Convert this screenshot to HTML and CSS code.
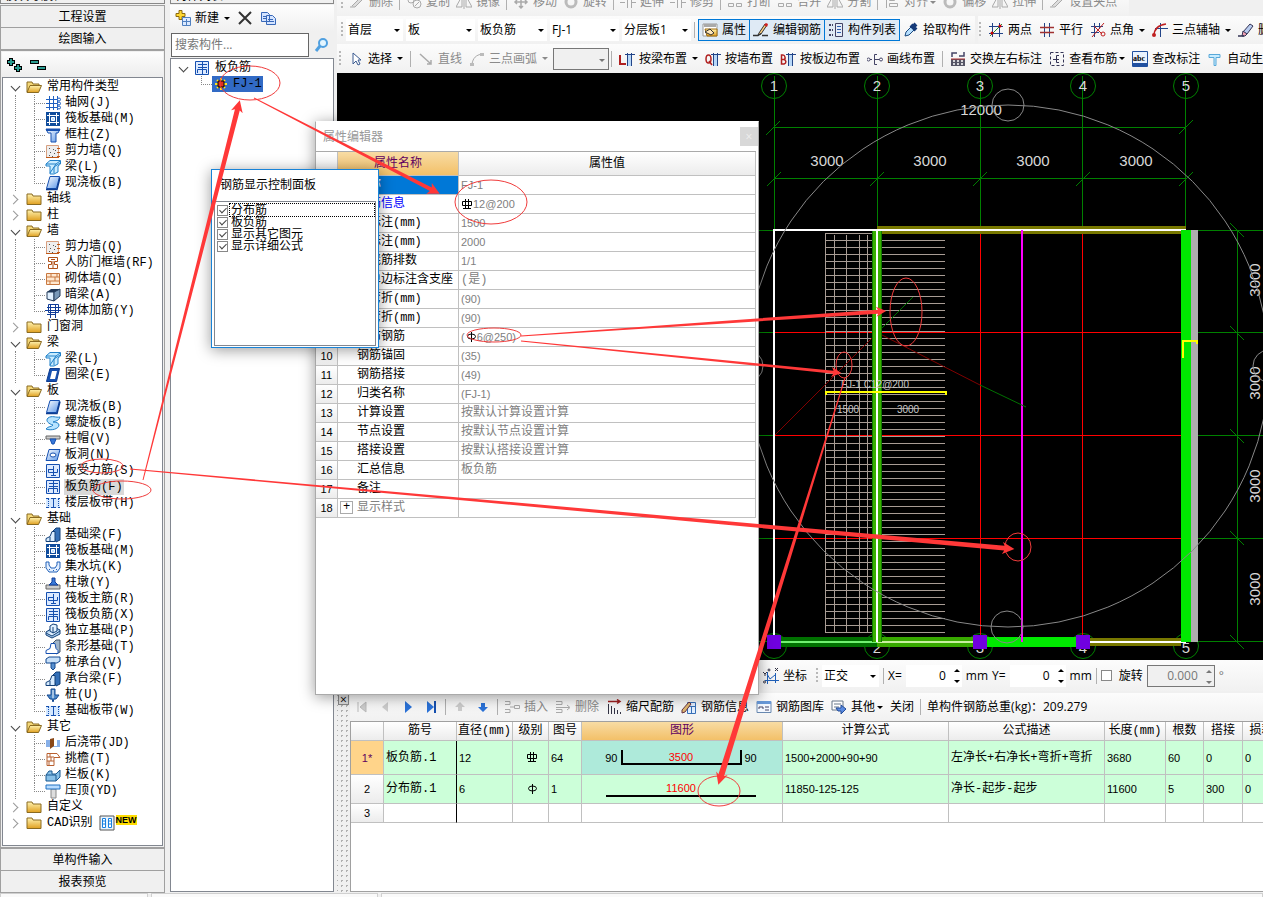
FILE: index.html
```
<!DOCTYPE html>
<html lang="zh-CN">
<head>
  <meta charset="UTF-8">
  <meta name="viewport" content="width=device-width, initial-scale=1.0">
  <title>板负筋 FJ-1</title>
  <link rel="stylesheet" href="styles.css">
</head>
<body>
  <!-- Icon set -->
  <svg class="sprite" aria-hidden="true">
    <defs>
      <linearGradient id="gold" x2="0" y2="1"><stop stop-color="#fff3b0"/><stop offset="1" stop-color="#e0a020"/></linearGradient>
      <linearGradient id="blue" x2="1" y2="1"><stop stop-color="#fff"/><stop offset="1" stop-color="#5a96e8"/></linearGradient>
    </defs>
    <symbol id="open" viewBox="0 0 16 16"><path d="M1 13V3h5l1 2h6v2" fill="#f4d878" stroke="#8a6a20"/><path d="M1 13.500 4 6.500h11.500l-3 7z" fill="url(#gold)" stroke="#8a6a20"/></symbol>
    <symbol id="folder" viewBox="0 0 16 16"><path d="M1 13.500V3h5l1 2h8v8.500z" fill="url(#gold)" stroke="#8a6a20"/></symbol>
    <symbol id="axis" viewBox="0 0 16 16"><path d="M4.500 1v14M8.500 1v14M12.500 1v14M1 4.500h13M1 8.500h13M1 12.500h13" stroke="#1e5fc0"/><g fill="#fff" stroke="#1e5fc0"><circle cx="14" cy="4.500" r="1.500"/><circle cx="14" cy="8.500" r="1.500"/><circle cx="14" cy="12.500" r="1.500"/></g></symbol>
    <symbol id="raft" viewBox="0 0 16 16"><path fill="#0f4c9c" d="M1 1h14v14H1z"/><path d="M2 4.500h12M2 11.500h12M4.500 2v12M11.500 2v12" stroke="#fff"/><path d="M6.500 6.500h3v3h-3z" stroke="#fff" fill="#bfe0ff"/></symbol>
    <symbol id="column" viewBox="0 0 16 16"><path d="M1 2h14l-2 4h-2v9H6V6H3z" fill="url(#blue)" stroke="#1650b0"/><path d="M1 3h14" stroke="#1650b0" stroke-width="2"/></symbol>
    <symbol id="wall" viewBox="0 0 16 16"><path d="M1.500 2.500h12v12h-12z" fill="#eee" stroke="#d8a080"/><path d="M1 14.500h13M12 5.500h3M12 9.500h3M12 13.500h3" stroke="#c05818"/><path d="M4 5.500h1M8 6.500h1M5 9.500h1M9 10.500h1M4 12.500h1M7 13.500h1M10 7.500h1" stroke="#555"/></symbol>
    <symbol id="beam" viewBox="0 0 16 16"><path d="M1 5 5 1.500h10.500V5L13 7v6l-4 2H5V7H1z" fill="#c8ecff" stroke="#2080c8"/><path d="M1 5h10l4-3M11 5l-6 9M9 14V8l6-4" stroke="#2080c8" fill="none"/></symbol>
    <symbol id="slab" viewBox="0 0 16 16"><path d="M5 1.500h9.500l-3 12h-10z" fill="url(#blue)" stroke="#1650b0"/><path d="M1 14.500h11l3-12" fill="none" stroke="#0d3c90" stroke-width="1.500"/></symbol>
    <symbol id="rf" viewBox="0 0 16 16"><path d="M3.500 2.500h9v4h-3v3h3v4h-9v-4h3v-3h-3z" fill="#fff" stroke="#b05018"/><path d="M6 4.500h4M8 6v7" stroke="#b05018"/></symbol>
    <symbol id="brick" viewBox="0 0 16 16"><path d="M1.500 2.500h13v11h-13zM1 6h14M1 10h14M6 2v4M10 6v4M5 10v4M12 2v4" fill="#ffe8d0" stroke="#c87840"/></symbol>
    <symbol id="box" viewBox="0 0 16 16"><path d="m2 5 4-3h9l-4 3z" fill="#203858"/><path d="M2 5h7v9l-7-2z" fill="#e0f0ff" stroke="#203858"/><path d="m9 5 6-3v7l-6 5z" fill="#7898b8" stroke="#203858"/></symbol>
    <symbol id="rein" viewBox="0 0 16 16"><path d="M3.500 1.500h10v8h-10zM0 7.500h16M5.500 1v14M10.500 1v14M2 4.500h14M2 11.500h9" fill="none" stroke="#103c98"/></symbol>
    <symbol id="ring" viewBox="0 0 16 16"><path d="M5 1.500h9.500l-3 13h-10z" fill="#1650b0" stroke="#0d3c90"/><path d="M7 4h5l-2 8H5z" fill="#fff"/></symbol>
    <symbol id="spiral" viewBox="0 0 16 16"><path d="M3 3c4-3 8 0 12-1-1 4-5 4-7 5 3 0 6 1 6 3 0 4-8 6-13 4 2-3 6-2 7-4C4 9 0 6 3 3z" fill="#b8e4ff" stroke="#2080c8"/></symbol>
    <symbol id="cap" viewBox="0 0 16 16"><path d="M1 5h14v3H1z" fill="#ccc" stroke="#666"/><path d="M5 8h6l-2 5H7z" fill="#3878d8" stroke="#1650b0"/></symbol>
    <symbol id="hole" viewBox="0 0 16 16"><path d="M4 2.500h11l-3 11H1z" fill="url(#blue)" stroke="#1650b0"/><ellipse cx="8" cy="8" rx="3" ry="2" fill="#fff" stroke="#1650b0"/></symbol>
    <symbol id="force" viewBox="0 0 16 16"><path d="M1.500 1.500h13v13h-13z" fill="#dceaff" stroke="#1650b0"/><path d="M8.500 3v10M4 6.500h4M3.500 6v3.500h9V6M6 12.500h5" fill="none" stroke="#1650b0"/></symbol>
    <symbol id="neg" viewBox="0 0 16 16"><path d="M1.500 1.500h13v13h-13z" fill="#dceaff" stroke="#1650b0"/><path d="M8.500 1v14M4 4.500h9M3.500 13V9.500h9V13M4 7.500h9" fill="none" stroke="#1650b0"/></symbol>
    <symbol id="strip" viewBox="0 0 16 16"><path fill="#d4e8ff" d="M1 3h14v10H1z"/><path d="M1 3.500h3M1 12.500h3M6 3.500h5M6 12.500h5M13 3.500h2M13 12.500h2M8.500 3v10" stroke="#1650b0"/><path d="M3.500 4v8M13.500 4v8" stroke="#1650b0" stroke-dasharray="1 1"/></symbol>
    <symbol id="fbeam" viewBox="0 0 16 16"><path d="m7 5 4-4h4v12l-4 2z" fill="#3470b8" stroke="#134078"/><path d="M1 14.500v-3l4-2 2-5h3v10z" fill="#d8ecff" stroke="#134078"/><path d="M5 10v4" stroke="#134078"/></symbol>
    <symbol id="sump" viewBox="0 0 16 16"><path d="M1 3h3v3l2 3h4l2-3V3h3v6l-3 4H4L1 9z" fill="#e4f0ff" stroke="#2060b8"/><path d="M4 10.500h1M8 11.500h1M11 10.500h1" stroke="#2060b8"/></symbol>
    <symbol id="pier" viewBox="0 0 16 16"><path d="M1 10h14v4H1z" fill="#ccc" stroke="#666"/><path d="m4 10 3-3V3h3v4l3 3z" fill="#3878d8" stroke="#103c98"/></symbol>
    <symbol id="iso" viewBox="0 0 16 16"><path d="m1 9 8-5 6 3v4l-8 4-6-3z" fill="#a8ccec" stroke="#134078"/><path d="M5 3 8 1l4 1v6L8 10 5 8zM8 4v6M1 10l6 3 8-5" fill="#e0f0ff" stroke="#134078"/></symbol>
    <symbol id="stripf" viewBox="0 0 16 16"><path d="m7 5 4-4h4v12l-4 2z" fill="#a0b4c8" stroke="#456"/><path d="M1 14.500v-3l4-2 1-5h4l1 5 2 2v3z" fill="#fff" stroke="#1650b0"/></symbol>
    <symbol id="pilecap" viewBox="0 0 16 16"><path d="m1 4 3-2h11v4l-3 2H1z" fill="#c8e0f8" stroke="#134890"/><path d="M6 8h4v5l-2 2-2-2z" fill="#5890d0" stroke="#134890"/></symbol>
    <symbol id="pile" viewBox="0 0 16 16"><path d="M6 2h4v6h4l-3 4H9l-1 3-1-3H5L2 8h4z" fill="#4c88c8" stroke="#134890"/><path d="M8 3v8" stroke="#fff"/></symbol>
    <symbol id="post" viewBox="0 0 16 16"><path d="M1 5h14v7H1z" fill="#88b0e8"/><path fill="#8a4818" d="m5 4 4-1v8l-4 3z"/><path fill="#fff" d="M9 5h3v6H9z"/></symbol>
    <symbol id="eave" viewBox="0 0 16 16"><path d="M2 2.500h10l3 4h-6v8H2zM2 6h7M2 10h7M5 2v4M6 6v4M4 10v4" fill="#fff" stroke="#b86030"/></symbol>
    <symbol id="rail" viewBox="0 0 16 16"><path d="m1 8 3-4h3v3h4l4-4v7l-4 4H1z" fill="#88c0e8" stroke="#185890"/><path d="M1 8h10v6" fill="none" stroke="#185890"/></symbol>
    <symbol id="top" viewBox="0 0 16 16"><path d="M6 6h5v9H6z" fill="#ddd" stroke="#888"/><path d="M1 2h14v4H1z" fill="#b8dcff" stroke="#2070c0"/></symbol>
    <symbol id="cad" viewBox="0 0 16 16"><path d="M1 1h14v14H1z" fill="#e8f4ff" stroke="#555"/><path d="M3.500 3.500h3v9h-3zM9.500 3.500h3v9h-3zM3 6h4M3 9h4M9 6h4M9 9h4" fill="#fff" stroke="#1880e0"/></symbol>
    <symbol id="rebar3" viewBox="0 0 12 12"><path d="M1.500 3.500h9v4h-9zM4.500 1v9M7.500 1v9M2 10.500h8" fill="none" stroke="#000"/></symbol>
    <symbol id="rebar1" viewBox="0 0 12 12"><ellipse cx="6.500" cy="5.500" rx="4" ry="2.500" fill="none" stroke="#000"/><path d="M6.500 1v10" stroke="#000"/></symbol>
    <!-- toolbar -->
    <symbol id="grey-pen" viewBox="0 0 16 16"><path d="m3 12 8-8 2 2-7 7H1" fill="#ddd" stroke="#aaa"/></symbol>
    <symbol id="grey-copy" viewBox="0 0 16 16"><circle cx="5" cy="6" r="3" fill="none" stroke="#aaa"/><circle cx="11" cy="10" r="4" fill="none" stroke="#aaa"/><path d="m9 12 4-4" stroke="#aaa"/></symbol>
    <symbol id="grey-pair" viewBox="0 0 16 16"><path d="M0 8.500h5M7.500 3v11M11.500 3v11M12 8.500h4" fill="none" stroke="#aaa"/></symbol>
    <symbol id="grey-tri" viewBox="0 0 16 16"><path d="M6 2v11H0zM10 2v11h6zM8 1v14" fill="none" stroke="#aaa"/></symbol>
    <symbol id="grey-move" viewBox="0 0 16 16"><path d="M8 2v12M2 8h12M6 12l2 2 2-2M6 4l2-2 2 2M4 6 2 8l2 2M12 6l2 2-2 2" fill="none" stroke="#aaa" stroke-width="1.500"/></symbol>
    <symbol id="grey-ring" viewBox="0 0 16 16"><circle cx="8" cy="8" r="5" fill="none" stroke="#bbb" stroke-width="3"/></symbol>
    <symbol id="grey-box" viewBox="0 0 16 16"><path d="M1.500 9.500h5v3h-5zM9.500 9.500h5v3h-5z" fill="none" stroke="#aaa"/></symbol>
    <symbol id="grey-align" viewBox="0 0 16 16"><path d="M2.500 1v13M5.500 3.500h5v3h-5zM5.500 9.500h8v3h-8z" fill="none" stroke="#aaa"/></symbol>
    <symbol id="prop" viewBox="0 0 16 16"><path d="M1 2h14v12H1z" fill="#fff" stroke="#999"/><path fill="#a9a9a9" d="M2 2h12v3H2z"/><path d="M3 7h12v7H5z" fill="url(#gold)" stroke="#a06c10"/><path d="m3 10 5-3 4 4-3 2z" fill="#ffe6b8" stroke="#333"/></symbol>
    <symbol id="edit" viewBox="0 0 16 16"><path d="m6 11 6-9 2 1-6 9-3 1z" fill="#ffd080" stroke="#333"/><path d="m11 3 2-2 2 1-1 3z" fill="#d02020"/><path d="M0 13.500h5l3-2M9 13.500h6" fill="none" stroke="#333" stroke-width="1.500"/></symbol>
    <symbol id="list" viewBox="0 0 16 16"><path d="M7.500 1.500h7v13h-7z" fill="#e4ecf8" stroke="#446"/><path d="M9 4.500h4M9 7.500h4M9 10.500h4" stroke="#3060b0"/><path d="M1 3h4M1 8h4M1 13h4" stroke="#446" stroke-dasharray="2 1" stroke-width="2"/></symbol>
    <symbol id="pick" viewBox="0 0 16 16"><path d="m2 14 1-4 6-6 3 3-6 6z" fill="#b8e0ff" stroke="#1a4a80"/><path d="m8 3 5 5M10 5l3-3" stroke="#153a78" stroke-width="4"/></symbol>
    <symbol id="two" viewBox="0 0 16 16"><path d="M4.500 1v14M11.500 1v14M1 4.500h14M1 11.500h14" stroke="#224488"/><path d="m2 14 12-12" stroke="#2a8a2a"/><circle cx="4" cy="11" r="1.500" fill="#c00"/><circle cx="12" cy="4" r="1.500" fill="#c00"/></symbol>
    <symbol id="par" viewBox="0 0 16 16"><path d="M5.500 1v14M10.500 1v14" stroke="#224488"/><path d="M1 5.500h14M1 10.500h14" stroke="#a03030" stroke-width="1.500"/></symbol>
    <symbol id="angle" viewBox="0 0 16 16"><path d="M4.500 1v14M1 4.500h12M1 10.500h8M9.500 1v6" stroke="#224488"/><path d="M2 15 14 1M4 4l8 8" stroke="#c02020"/><circle cx="13" cy="12" r="2" fill="none" stroke="#c02020"/></symbol>
    <symbol id="arc" viewBox="0 0 16 16"><path d="M8.500 1v14M3 6.500h13" stroke="#224488"/><path d="M2 14C2 7 6 3 14 2" fill="none" stroke="#c02020" stroke-width="1.500"/><circle cx="2" cy="13" r="2" fill="#c02020"/></symbol>
    <symbol id="eraser" viewBox="0 0 16 16"><path d="m5 10 7-8 3 2-6 8z" fill="#b8ccf0" stroke="#335"/><path d="m5 9 4 3-2 2H4z" fill="#f0a0b0" stroke="#335"/><path d="M0 14h6" stroke="#335" stroke-width="1.500"/></symbol>
    <symbol id="cursor" viewBox="0 0 16 16"><path d="M5 2v11l3-3 2 4 2-1-2-4h3z" fill="#fff" stroke="#3a5a90"/></symbol>
    <symbol id="line" viewBox="0 0 16 16"><path d="m2 3 11 10M13 9v4H9" fill="none" stroke="#aaa" stroke-width="1.500"/></symbol>
    <symbol id="curve" viewBox="0 0 16 16"><path d="M3 13C4 7 7 4 13 3" fill="none" stroke="#aaa"/><path d="M1 12h4v3H1zM11 2h4v3h-4z" fill="#bbb"/></symbol>
    <symbol id="tee" viewBox="0 0 16 16"><path fill="#b8d8f8" d="M9 4h3v11H9z"/><path d="M6 3.500h10M8.500 2v13M12.500 2v13" stroke="#224488"/></symbol>
    <symbol id="by-l" viewBox="0 0 16 16"><use href="#tee"/><path d="M1 4v9h6" fill="none" stroke="#b02020" stroke-width="2"/></symbol>
    <symbol id="by-q" viewBox="0 0 16 16"><use href="#tee"/><ellipse cx="3.500" cy="8" rx="2.500" ry="4" fill="none" stroke="#b02020" stroke-width="1.500"/><path d="m4 10 3 4" stroke="#b02020" stroke-width="1.500"/></symbol>
    <symbol id="by-b" viewBox="0 0 16 16"><use href="#tee"/><path d="M1.500 4v9H4c3-1 2-4 0-4.500C6 8 5 4 3 4zM2 8.500h2" fill="none" stroke="#b02020" stroke-width="1.500"/></symbol>
    <symbol id="draw" viewBox="0 0 16 16"><path d="M10 3.500H7.500v10H10M3 8.500h2M7 8.500h6" fill="none" stroke="#446"/><circle cx="1.500" cy="8.500" r="1.500" fill="#fff" stroke="#446"/><circle cx="14" cy="8.500" r="1.500" fill="#fff" stroke="#446"/></symbol>
    <symbol id="swap" viewBox="0 0 16 16"><path d="M2 6V2h5M9 5h5V1" fill="none" stroke="#446" stroke-width="1.500"/><path d="M1 8h14v7H1z" fill="#556"/><path d="M3 10h2M7 10h2M11 10h2M3 13h2M7 13h2M11 13h2" stroke="#fff" stroke-width="1.500"/><path d="M1 8h14" stroke="#b03030"/></symbol>
    <symbol id="view" viewBox="0 0 16 16"><path d="M1.500 1.500h13v13h-13z" fill="none" stroke="#335" stroke-dasharray="3 2"/><path d="M10 4.500H7.500v7H10M4 8.500h6" fill="none" stroke="#335"/></symbol>
    <symbol id="abc" viewBox="0 0 16 16"><path d="M.5.500h15v15H.5z" fill="#e8f2ff" stroke="#2050a0"/><path fill="#2050a0" d="M1 12h14v3H1z"/><text x="1" y="10" font-size="8" font-weight="bold" font-family="Liberation Serif">abc</text></symbol>
    <symbol id="auto" viewBox="0 0 16 16"><path d="M2 3.500h11v3h-4v8H7v-8H2z" fill="#c8ecff" stroke="#58a8d8"/></symbol>
    <symbol id="coord" viewBox="0 0 16 16"><path d="M4.500 4v12M2 12.500h14M12.500 5v10M4 6l3 5 5-4" fill="none" stroke="#2060b8"/><path d="m0 4 2 2 2-2M2 6v2M12 0l3 3M15 0l-3 3" fill="none" stroke="#334"/><circle cx="6" cy="2" r="1" fill="none" stroke="#334"/><circle cx="1.500" cy="14" r="1" fill="none" stroke="#334"/></symbol>
    <symbol id="first" viewBox="0 0 16 16"><path d="M4 3v10M12 3v10L6 8z" fill="#ccc" stroke="#bbb"/></symbol>
    <symbol id="prev" viewBox="0 0 16 16"><path d="M11 3v10L5 8z" fill="#ccc"/></symbol>
    <symbol id="next" viewBox="0 0 16 16"><path d="M5 2v12l7-6z" fill="#2a72d8"/></symbol>
    <symbol id="last" viewBox="0 0 16 16"><path d="M4 2v12l7-6z" fill="#2a72d8"/><path d="M12 2v12" stroke="#1650b0" stroke-width="2"/></symbol>
    <symbol id="up" viewBox="0 0 16 16"><path d="m8 3 5 5h-3v4H6V8H3z" fill="#ccc"/></symbol>
    <symbol id="down" viewBox="0 0 16 16"><path d="m8 13 5-5h-3V4H6v4H3z" fill="#2a72d8"/></symbol>
    <symbol id="insert" viewBox="0 0 16 16"><path d="M1 2.500h5v3H1M1 13.500h5v-3H1M6 8h4M10.500 6.500h5v3h-5z" fill="none" stroke="#aaa"/></symbol>
    <symbol id="remove" viewBox="0 0 16 16"><path d="M1 2.500h6v3H1M1 13.500h6v-3H1M1 8.500h13M12 6l3 2.500-3 2.500" fill="none" stroke="#aaa"/></symbol>
    <symbol id="scale" viewBox="0 0 16 16"><path d="M2 2.500h11M11 .5l3 2-3 2" fill="none" stroke="#a02020" stroke-width="1.500"/><path d="M2.500 5v10M5.500 7v8M8.500 9v6M11.500 11v4M14.500 13v2" stroke="#334"/></symbol>
    <symbol id="info" viewBox="0 0 16 16"><path d="M6.500 3.500h8v11h-8zM6 7.500h9M10.500 7v7" fill="#e4f0ff" stroke="#3870b8"/><path d="m1 11 7-8 2 2-6 8-3 1z" fill="#e0b870" stroke="#634"/></symbol>
    <symbol id="lib" viewBox="0 0 16 16"><path d="M1 2.500h14v11H1z" fill="#f4f8ff" stroke="#6888b0"/><path fill="#6898d8" d="M1 2h14v3H1z"/><path d="M3 10V8h4v2M9 8h4M9 11h4" fill="none" stroke="#446"/></symbol>
    <symbol id="other" viewBox="0 0 16 16"><path d="M1 2h11v9H1z" fill="#fff" stroke="#678"/><path d="M3 5h7M3 8h5" stroke="#678"/><path d="M5 9h5V6l5 4-5 5v-3H7z" fill="#5a8ae0" stroke="#224c98"/></symbol>
  </svg>

  <div class="app">
    <div class="workspace">
      <!-- Module navigation -->
      <nav class="dock modules">
        <div class="dock-title"><span>模块导航栏</span><span>+ ×</span></div>
        <button class="section-btn">工程设置</button>
        <button class="section-btn">绘图输入</button>
        <div class="module-panel">
          <div class="tree-tools">
            <button aria-label="展开"><svg width="18" height="16" viewBox="0 0 18 16"><path d="M1 5h8M5 1v8M8 11h8M12 7v8" stroke="#000" stroke-width="4"/><path d="M2 5h6M5 2v6M9 11h6M12 8v6" stroke="#2a9c90" stroke-width="2"/></svg></button>
            <button aria-label="折叠"><svg width="18" height="16" viewBox="0 0 18 16"><path d="M1 5h9M8 11h9" stroke="#000" stroke-width="4"/><path d="M2 5h7M9 11h7" stroke="#2a9c90" stroke-width="2"/></svg></button>
          </div>
          <ul class="tree">
            <li class="open"><b><svg><use href="#open"/></svg>常用构件类型</b>
              <ul>
                <li><svg><use href="#axis"/></svg><span>轴网(J)</span></li>
                <li><svg><use href="#raft"/></svg><span>筏板基础(M)</span></li>
                <li><svg><use href="#column"/></svg><span>框柱(Z)</span></li>
                <li><svg><use href="#wall"/></svg><span>剪力墙(Q)</span></li>
                <li><svg><use href="#beam"/></svg><span>梁(L)</span></li>
                <li><svg><use href="#slab"/></svg><span>现浇板(B)</span></li>
              </ul>
            </li>
            <li><b><svg><use href="#folder"/></svg>轴线</b></li>
            <li><b><svg><use href="#folder"/></svg>柱</b></li>
            <li class="open"><b><svg><use href="#open"/></svg>墙</b>
              <ul>
                <li><svg><use href="#wall"/></svg><span>剪力墙(Q)</span></li>
                <li><svg><use href="#rf"/></svg><span>人防门框墙(RF)</span></li>
                <li><svg><use href="#brick"/></svg><span>砌体墙(Q)</span></li>
                <li><svg><use href="#box"/></svg><span>暗梁(A)</span></li>
                <li><svg><use href="#rein"/></svg><span>砌体加筋(Y)</span></li>
              </ul>
            </li>
            <li><b><svg><use href="#folder"/></svg>门窗洞</b></li>
            <li class="open"><b><svg><use href="#open"/></svg>梁</b>
              <ul>
                <li><svg><use href="#beam"/></svg><span>梁(L)</span></li>
                <li><svg><use href="#ring"/></svg><span>圈梁(E)</span></li>
              </ul>
            </li>
            <li class="open"><b><svg><use href="#open"/></svg>板</b>
              <ul>
                <li><svg><use href="#slab"/></svg><span>现浇板(B)</span></li>
                <li><svg><use href="#spiral"/></svg><span>螺旋板(B)</span></li>
                <li><svg><use href="#cap"/></svg><span>柱帽(V)</span></li>
                <li><svg><use href="#hole"/></svg><span>板洞(N)</span></li>
                <li><svg><use href="#force"/></svg><span>板受力筋(S)</span></li>
                <li class="current"><svg><use href="#neg"/></svg><span>板负筋(F)</span></li>
                <li><svg><use href="#strip"/></svg><span>楼层板带(H)</span></li>
              </ul>
            </li>
            <li class="open"><b><svg><use href="#open"/></svg>基础</b>
              <ul>
                <li><svg><use href="#fbeam"/></svg><span>基础梁(F)</span></li>
                <li><svg><use href="#raft"/></svg><span>筏板基础(M)</span></li>
                <li><svg><use href="#sump"/></svg><span>集水坑(K)</span></li>
                <li><svg><use href="#pier"/></svg><span>柱墩(Y)</span></li>
                <li><svg><use href="#force"/></svg><span>筏板主筋(R)</span></li>
                <li><svg><use href="#neg"/></svg><span>筏板负筋(X)</span></li>
                <li><svg><use href="#iso"/></svg><span>独立基础(P)</span></li>
                <li><svg><use href="#stripf"/></svg><span>条形基础(T)</span></li>
                <li><svg><use href="#pilecap"/></svg><span>桩承台(V)</span></li>
                <li><svg><use href="#fbeam"/></svg><span>承台梁(F)</span></li>
                <li><svg><use href="#pile"/></svg><span>桩(U)</span></li>
                <li><svg><use href="#strip"/></svg><span>基础板带(W)</span></li>
              </ul>
            </li>
            <li class="open"><b><svg><use href="#open"/></svg>其它</b>
              <ul>
                <li><svg><use href="#post"/></svg><span>后浇带(JD)</span></li>
                <li><svg><use href="#eave"/></svg><span>挑檐(T)</span></li>
                <li><svg><use href="#rail"/></svg><span>栏板(K)</span></li>
                <li><svg><use href="#top"/></svg><span>压顶(YD)</span></li>
              </ul>
            </li>
            <li><b><svg><use href="#folder"/></svg>自定义</b></li>
            <li><b><svg><use href="#folder"/></svg>CAD识别<svg class="cad"><use href="#cad"/></svg><em>NEW</em></b></li>
          </ul>
        </div>
        <button class="section-btn">单构件输入</button>
        <button class="section-btn">报表预览</button>
      </nav>

      <!-- Component list -->
      <section class="dock components">
        <div class="dock-title"><span>构件列表</span><span>+ ×</span></div>
        <div class="component-tools">
          <button><svg viewBox="0 0 16 16"><path d="M4 .5h3v3h3v3H7v3H4v-3H1v-3h3z" fill="#ffd830" stroke="#8a6a10"/><path d="M7.500 7.500h8v8h-8zM8 11.500h8M11.500 9v6" fill="#dceaff" stroke="#5080c0"/></svg>新建<i class="caret"></i></button>
          <button aria-label="删除构件"><svg viewBox="0 0 16 16"><path d="m2 2 12 12M14 2 2 14" stroke="#333" stroke-width="2"/></svg></button>
          <button aria-label="复制构件"><svg viewBox="0 0 16 16"><path d="M1.500 2.500h6l2 2v7h-8zM6.500 5.500h6l3 3v6h-9z" fill="#d4e4ff" stroke="#3868b8"/><path d="M3 6.500h3M3 8.500h3M8 9.500h5M8 11.500h6" stroke="#3868b8"/></svg></button>
        </div>
        <div class="search">
          <input type="text" placeholder="搜索构件..." aria-label="搜索构件">
          <button aria-label="搜索"><svg viewBox="0 0 16 16"><circle cx="9" cy="6" r="4" fill="#e4f6ff" stroke="#50a0e0" stroke-width="2"/><path d="m6 9-4 5" stroke="#50a0e0" stroke-width="3"/></svg></button>
        </div>
        <ul class="tree component-tree">
          <li class="open"><b><svg><use href="#neg"/></svg>板负筋</b>
            <ul>
              <li class="picked"><span><svg viewBox="0 0 16 16"><path d="M8 2v12M2 8h12M4 4l8 8M12 4l-8 8" stroke="#ffe020" stroke-width="2"/><path d="M5 5h6v6H5z" fill="#e03020" stroke="#000"/></svg>FJ-1</span></li>
            </ul>
          </li>
        </ul>
      </section>

      <main>
        <!-- Toolbars -->
        <div class="toolbar edit-bar">
          <i class="grip"></i>
          <button disabled><svg><use href="#grey-pen"/></svg>删除</button><i class="sep"></i>
          <button disabled><svg><use href="#grey-copy"/></svg>复制</button>
          <button disabled><svg><use href="#grey-tri"/></svg>镜像</button><i class="sep"></i>
          <button disabled><svg><use href="#grey-move"/></svg>移动</button>
          <button disabled><svg><use href="#grey-ring"/></svg>旋转</button><i class="sep"></i>
          <button disabled><svg><use href="#grey-pair"/></svg>延伸</button>
          <button disabled><svg><use href="#grey-pair"/></svg>修剪</button><i class="sep"></i>
          <button disabled><svg><use href="#grey-box"/></svg>打断</button>
          <button disabled><svg><use href="#grey-box"/></svg>合并</button>
          <button disabled><svg><use href="#grey-tri"/></svg>分割</button><i class="sep"></i>
          <button disabled class="tight"><svg><use href="#grey-align"/></svg>对齐<i class="caret"></i></button>
          <button disabled><svg><use href="#grey-ring"/></svg>偏移</button>
          <button disabled><svg><use href="#grey-tri"/></svg>拉伸</button><i class="sep"></i>
          <button disabled><svg><use href="#grey-pen"/></svg>设置夹点</button>
        </div>

        <div class="bar-row">
          <div class="toolbar layer-bar">
            <i class="grip"></i>
            <span class="combo short"><select aria-label="楼层"><option>首层</option></select></span>
            <span class="combo"><select aria-label="构件类别"><option>板</option></select></span>
            <span class="combo"><select aria-label="构件类型"><option>板负筋</option></select></span>
            <span class="combo"><select aria-label="构件"><option>FJ-1</option></select></span>
            <span class="combo"><select aria-label="分层"><option>分层板1</option></select></span>
            <i class="sep"></i>
            <div class="toggles">
              <button class="on"><svg><use href="#prop"/></svg>属性</button>
              <button class="on"><svg><use href="#edit"/></svg>编辑钢筋</button>
              <button class="on"><svg><use href="#list"/></svg>构件列表</button>
              <button><svg><use href="#pick"/></svg>拾取构件</button>
            </div>
          </div>
          <div class="toolbar axis-bar">
            <i class="grip"></i>
            <button><svg><use href="#two"/></svg>两点</button>
            <button><svg><use href="#par"/></svg>平行</button>
            <button><svg><use href="#angle"/></svg>点角<i class="caret"></i></button>
            <button><svg><use href="#arc"/></svg>三点辅轴<i class="caret"></i></button>
            <button><svg><use href="#eraser"/></svg>删除辅轴</button>
          </div>
        </div>

        <div class="toolbar draw-bar">
          <i class="grip"></i>
          <button><svg><use href="#cursor"/></svg>选择<i class="caret"></i></button><i class="sep"></i>
          <button disabled><svg><use href="#line"/></svg>直线</button>
          <button disabled><svg><use href="#curve"/></svg>三点画弧<i class="caret"></i></button>
          <span class="combo boxed"><select aria-label="画弧方式" disabled><option></option></select></span><i class="sep"></i>
          <button><svg><use href="#by-l"/></svg>按梁布置<i class="caret"></i></button>
          <button><svg><use href="#by-q"/></svg>按墙布置</button>
          <button><svg><use href="#by-b"/></svg>按板边布置</button>
          <button><svg><use href="#draw"/></svg>画线布置</button><i class="sep"></i>
          <button><svg><use href="#swap"/></svg>交换左右标注</button>
          <button class="tight"><svg><use href="#view"/></svg>查看布筋<i class="caret"></i></button>
          <button><svg><use href="#abc"/></svg>查改标注</button>
          <button><svg><use href="#auto"/></svg>自动生成负筋</button>
        </div>

        <!-- Drawing -->
        <svg class="canvas" viewBox="337 73 926 587" preserveAspectRatio="xMinYMin slice">
          <defs>
            <pattern id="bars" x="0" y="233" width="10" height="7" patternUnits="userSpaceOnUse"><path fill="#a89c94" d="M0 0h10v1H0z"/></pattern>
          </defs>
          <path fill="#000" d="M337 73h926v587H337z"/>
          <g fill="none" stroke="#008000" shape-rendering="crispEdges">
            <path d="M774.500 76v154M877.500 76v154M980.500 76v154M1082.500 76v154M1185.500 76v154M774 127.500h412M774 178.500h412"/>
            <path d="M759 230.500h504M759 332.500h504M759 435.500h504M759 538.500h504M759 641.500h504M1237.500 230v412"/>
          </g>
          <g fill="none" stroke="#008000">
            <circle cx="774" cy="86" r="12.500"/><circle cx="877" cy="86" r="12.500"/><circle cx="980" cy="86" r="12.500"/><circle cx="1083" cy="86" r="12.500"/><circle cx="1186" cy="86" r="12.500"/>
            <circle cx="774" cy="646" r="12.500"/><circle cx="877" cy="646" r="12.500"/><circle cx="980" cy="646" r="12.500"/><circle cx="1083" cy="646" r="12.500"/><circle cx="1186" cy="646" r="12.500"/>
            <path d="m766 135 14-14M1179 134l14-14M767 186l14-14M870 186l14-14M973 186l14-14M1076 186l14-14M1179 186l14-14"/>
            <path d="m1230 223 14 14M1230 326l14 14M1230 429l14 14M1230 531l14 14M1230 635l14 14"/>
          </g>
          <g class="bubble-text">
            <text x="774" y="91">1</text><text x="877" y="91">2</text><text x="980" y="91">3</text><text x="1083" y="91">4</text><text x="1186" y="91">5</text>
            <text x="877" y="653">2</text><text x="980" y="653">3</text><text x="1083" y="653">4</text><text x="1186" y="653">5</text>
            <text x="981" y="115">12000</text>
            <text x="827" y="166">3000</text><text x="930" y="166">3000</text><text x="1033" y="166">3000</text><text x="1136" y="166">3000</text>
            <text transform="translate(1260 280) rotate(-90)">3000</text><text transform="translate(1260 383) rotate(-90)">3000</text><text transform="translate(1260 486) rotate(-90)">3000</text><text transform="translate(1260 589) rotate(-90)">3000</text>
          </g>
          <g shape-rendering="crispEdges">
            <path d="M980 234h1v404h-1zM1082 234h1v404h-1zM774 332h408v1H774zM774 435h408v1H774zM774 538h408v1H774z" fill="#f00"/>
            <path fill="url(#bars)" d="M825 233h120v401H825z"/>
            <path d="M825.500 233v400M834.500 235v398M846.500 235v398M859.500 235v398M867.500 235v398" stroke="#a89c94"/>
            <path fill="#787800" d="M877 226h309v8H877zM1083 638h98v8h-98z"/>
            <path fill="#007000" d="M774 637h103v10H774z"/>
            <path fill="#38a800" d="M877 637h103v10H877z"/>
            <path fill="#00e800" d="M980 637h103v10H980z"/>
            <path fill="#70f070" d="M774 641h103v2H774z"/>
            <path fill="#c8f0a0" d="M877 641h103v2H877z"/>
            <path fill="#107800" d="M872 230h10v412h-10z"/>
            <path fill="#38b000" d="M873 230h8v412h-8z"/>
            <path fill="#fff" d="M773 229h413v2H773zM773 229h2v412h-2zM876 230h2v412h-2zM1083 641h103v2h-103z"/>
            <path fill="#00e800" d="M1181 230h10v412h-10z"/>
            <path fill="#adadad" d="M1191 230h7v412h-7z"/>
            <path fill="#f0f" d="M1021 230h2v412h-2z"/>
            <path d="M1183 358v-17h14v3M826 395v-3h120v3" fill="none" stroke="#ff0" stroke-width="2"/>
            <path fill="#7000e0" d="M767 635h14v14h-14zM973 635h14v14h-14zM1076 635h14v14h-14z"/>
          </g>
          <g fill="none">
            <path d="m775 435 97-97M882 335l98 50" stroke="#800000"/>
            <path d="m882 328 31-31M980 385l46 22" stroke="#007000"/>
            <g stroke="#888"><circle cx="1008" cy="366" r="261"/><circle cx="1008" cy="105" r="16"/><circle cx="1007" cy="627" r="16"/><circle cx="747" cy="366" r="16"/><circle cx="1269" cy="366" r="16"/></g>
          </g>
          <g class="bar-text"><text x="875" y="388">FJ-1 C12@200</text><text x="848" y="413">1500</text><text x="908" y="413">3000</text></g>
        </svg>

        <!-- Coordinate bar -->
        <div class="toolbar coord-bar">
          <button><svg><use href="#coord"/></svg>坐标</button>
          <i class="grip"></i>
          <span class="combo short"><select aria-label="捕捉方式"><option>正交</option></select></span>
          <i class="sep"></i>
          <label for="pos-x">X=</label><span class="spin"><input id="pos-x" type="text" value="0"><i></i></span><span>mm</span>
          <label for="pos-y">Y=</label><span class="spin"><input id="pos-y" type="text" value="0"><i></i></span><span>mm</span>
          <i class="sep"></i>
          <input type="checkbox" id="rotate" class="tick"><label for="rotate" class="rotate-label">旋转</label>
          <span class="spin boxed"><input type="text" value="0.000" aria-label="旋转角度" disabled><i></i></span><span class="degree">°</span>
        </div>

        <!-- Rebar editor -->
        <div class="rebar-dock">
          <div class="rebar-handle"><button aria-label="关闭窗格">×</button></div>
          <section class="rebar">
            <div class="toolbar rebar-bar">
              <button disabled aria-label="首行"><svg><use href="#first"/></svg></button>
              <button disabled aria-label="上一行"><svg><use href="#prev"/></svg></button>
              <button aria-label="下一行"><svg><use href="#next"/></svg></button>
              <button aria-label="末行"><svg><use href="#last"/></svg></button><i class="sep"></i>
              <button disabled aria-label="上移"><svg><use href="#up"/></svg></button>
              <button aria-label="下移"><svg><use href="#down"/></svg></button><i class="sep"></i>
              <button disabled><svg><use href="#insert"/></svg>插入</button>
              <button disabled><svg><use href="#remove"/></svg>删除</button>
              <button><svg><use href="#scale"/></svg>缩尺配筋</button>
              <button><svg><use href="#info"/></svg>钢筋信息</button>
              <button><svg><use href="#lib"/></svg>钢筋图库</button>
              <button class="tight"><svg><use href="#other"/></svg>其他<i class="caret"></i></button>
              <button>关闭</button><i class="sep"></i>
              <span>单构件钢筋总重(kg)：209.279</span>
            </div>
            <div class="rebar-sheet">
              <table class="rebar-table">
                <colgroup><col class="c-no"><col class="c-name"><col class="c-dia"><col class="c-grade"><col class="c-fig"><col class="c-shape"><col class="c-calc"><col class="c-desc"><col class="c-len"><col class="c-count"><col class="c-lap"><col class="c-loss"></colgroup>
                <thead>
                  <tr><th></th><th>筋号</th><th>直径(mm)</th><th>级别</th><th>图号</th><th class="active">图形</th><th>计算公式</th><th>公式描述</th><th>长度(mm)</th><th>根数</th><th>搭接</th><th>损耗</th></tr>
                </thead>
                <tbody>
                  <tr class="row-1"><th class="active">1*</th><td>板负筋.1</td><td class="num">12</td><td class="grade"><svg><use href="#rebar3"/></svg></td><td class="num">64</td>
                    <td class="shape active"><div class="figure"><span>90</span><b class="hooked">3500</b><span>90</span></div></td>
                    <td class="num">1500+2000+90+90</td><td>左净长+右净长+弯折+弯折</td><td class="num">3680</td><td class="num">60</td><td class="num">0</td><td class="num">0</td></tr>
                  <tr class="row-2"><th>2</th><td>分布筋.1</td><td class="num">6</td><td class="grade"><svg><use href="#rebar1"/></svg></td><td class="num">1</td>
                    <td class="shape"><div class="figure"><b>11600</b></div></td>
                    <td class="num">11850-125-125</td><td>净长-起步-起步</td><td class="num">11600</td><td class="num">5</td><td class="num">300</td><td class="num">0</td></tr>
                  <tr class="row-3"><th>3</th><td></td><td></td><td></td><td></td><td></td><td></td><td></td><td></td><td></td><td></td><td></td></tr>
                </tbody>
              </table>
            </div>
          </section>
        </div>
      </main>
    </div>
    <footer><span></span><span></span><span></span></footer>
  </div>

  <!-- Property editor window -->
  <section class="window props">
    <header>属性编辑器<button aria-label="关闭">×</button></header>
    <table>
      <colgroup><col class="p-no"><col class="p-name"><col></colgroup>
      <thead><tr><th></th><th class="active">属性名称</th><th>属性值</th></tr></thead>
      <tbody>
        <tr class="selected"><th>1</th><td>名称</td><td class="num">FJ-1</td></tr>
        <tr class="link"><th>2</th><td>钢筋信息</td><td class="num"><svg><use href="#rebar3"/></svg>12@200</td></tr>
        <tr><th>3</th><td>左标注(mm)</td><td class="num">1500</td></tr>
        <tr><th>4</th><td>右标注(mm)</td><td class="num">2000</td></tr>
        <tr><th>5</th><td>马凳筋排数</td><td class="num">1/1</td></tr>
        <tr><th>6</th><td>非单边标注含支座</td><td>(是)</td></tr>
        <tr><th>7</th><td>左弯折(mm)</td><td class="num">(90)</td></tr>
        <tr><th>8</th><td>右弯折(mm)</td><td class="num">(90)</td></tr>
        <tr><th>9</th><td>分布钢筋</td><td class="num">(<svg><use href="#rebar1"/></svg>6@250)</td></tr>
        <tr><th>10</th><td>钢筋锚固</td><td class="num">(35)</td></tr>
        <tr><th>11</th><td>钢筋搭接</td><td class="num">(49)</td></tr>
        <tr><th>12</th><td>归类名称</td><td class="num">(FJ-1)</td></tr>
        <tr><th>13</th><td>计算设置</td><td>按默认计算设置计算</td></tr>
        <tr><th>14</th><td>节点设置</td><td>按默认节点设置计算</td></tr>
        <tr><th>15</th><td>搭接设置</td><td>按默认搭接设置计算</td></tr>
        <tr><th>16</th><td>汇总信息</td><td>板负筋</td></tr>
        <tr><th>17</th><td>备注</td><td></td></tr>
        <tr class="group"><th>18</th><td><button aria-label="展开显示样式">+</button>显示样式</td><td></td></tr>
      </tbody>
    </table>
  </section>

  <!-- Rebar display panel -->
  <section class="window display">
    <header>钢筋显示控制面板</header>
    <div class="checks">
      <label class="focus"><input type="checkbox" class="tick" checked><span>分布筋</span></label>
      <label><input type="checkbox" class="tick" checked><span>板负筋</span></label>
      <label><input type="checkbox" class="tick" checked><span>显示其它图元</span></label>
      <label><input type="checkbox" class="tick" checked><span>显示详细公式</span></label>
    </div>
  </section>

  <!-- Red markup -->
  <svg class="markup" width="1263" height="897" aria-hidden="true">
    <g fill="none" stroke="#f03c3c">
      <ellipse cx="250" cy="83" rx="30" ry="17"/><ellipse cx="491" cy="202" rx="36" ry="22"/><ellipse cx="494" cy="335" rx="27" ry="7"/>
      <ellipse cx="102" cy="466" rx="21" ry="7"/><ellipse cx="122" cy="490" rx="29" ry="9"/><ellipse cx="906" cy="312" rx="16" ry="34"/>
      <ellipse cx="844" cy="365" rx="8" ry="13"/><ellipse cx="1018" cy="547" rx="13" ry="14"/><ellipse cx="719" cy="791" rx="21" ry="15"/>
    </g>
    <g fill="#ff3838">
      <path transform="translate(143 480) rotate(-75.700)" d="M0-.5 382-2.500 380-6 392 0 380 6 382 2.500 0 .5z"/>
      <path transform="translate(254 98) rotate(27.300)" d="M0-.5 199-2 197-6 209 0 197 6 199 2 0 .5z"/>
      <path transform="translate(521 336) rotate(-3.900)" d="M0-.5 358-2 356-5 366 0 356 5 358 2 0 .5z"/>
      <path transform="translate(521 341) rotate(5.700)" d="M0-.5 314-1.500 312-5 322 0 312 5 314 1.500 0 .5z"/>
      <path transform="translate(130 469) rotate(5.170)" d="M0-.5 878-2.500 876-6 888 0 876 6 878 2.500 0 .5z"/>
      <path transform="translate(845 378) rotate(107.300)" d="M0-.5 416-3 414-6 426 0 414 6 416 3 0 .5z"/>
    </g>
  </svg>
</body>
</html>
```
FILE: styles.css
```
/* General */
* {
  box-sizing: border-box;
}

body {
  margin: 0;
  overflow: hidden;
  position: relative;
  background: #f0f0f0;
  color: #000;
  font: 12px/16px "Open Sans", "Noto Sans CJK SC", sans-serif;
}

button, input, select {
  font: inherit;
  color: inherit;
  margin: 0;
  padding: 0;
  border: 0;
  background: none;
  border-radius: 0;
}

button svg {
  width: 16px;
  height: 16px;
  flex: none;
}

ul {
  list-style: none;
  margin: 0;
  padding: 0;
}

table {
  border-collapse: separate;
  border-spacing: 0;
  table-layout: fixed;
}

.sprite {
  position: absolute;
  width: 0;
  height: 0;
}

.app {
  height: 100vh;
  display: flex;
  flex-direction: column;
}

.workspace {
  flex: 1;
  min-height: 0;
  display: flex;
}

.caret {
  width: 0;
  border: 3px solid transparent;
  border-top-color: currentColor;
  border-bottom: 0;
  margin-left: 1px;
}

/* Docked panels */
.dock {
  display: flex;
  flex-direction: column;
  flex: none;
}

.dock-title {
  height: 4px;
  border: 1px solid #888;
  border-top: 0;
  overflow: hidden;
  display: flex;
  justify-content: space-between;
  align-items: flex-end;
  padding: 0 4px;
  line-height: 14px;
  margin-bottom: 1px;
}

.modules {
  width: 165px;
  margin-right: 5px;
}

.section-btn {
  height: 23px;
  flex: none;
  border: 1px solid #a0a0a0;
  background: #f0f0f0;
  margin-bottom: -1px;
}

.module-panel {
  flex: 1;
  min-height: 0;
  margin-top: 1px;
  padding: 1px;
  border: 1px solid #a0a0a0;
  display: flex;
  flex-direction: column;
}

.tree-tools {
  height: 25px;
  flex: none;
  display: flex;
  align-items: center;
  gap: 5px;
  padding-left: 4px;
  background: linear-gradient(#fdfdfd, #ededed);
}

.tree-tools svg {
  width: 18px;
  display: block;
}

/* Trees */
.tree {
  flex: 1;
  min-height: 0;
  background: #fff;
  border: 1px solid #828790;
  padding-top: 1px;
  overflow: hidden;
  font-family: "Liberation Mono", "Noto Sans CJK SC", monospace;
}

.tree li {
  position: relative;
}

.tree svg {
  width: 16px;
  height: 16px;
  flex: none;
}

.tree b {
  font-weight: normal;
  display: flex;
  align-items: center;
  gap: 5px;
  height: 16px;
  padding-left: 23px;
}

.tree b::before {
  content: "";
  position: absolute;
  left: 7px;
  top: 5px;
  width: 6px;
  height: 6px;
  border: solid #999;
  border-width: 1px 1px 0 0;
  transform: rotate(45deg);
}

.tree .open > b::before {
  left: 9px;
  top: 4px;
  border-color: #444;
  border-width: 0 1px 1px 0;
}

.tree ul {
  margin-left: 12px;
  border-left: 1px dotted #888;
}

.tree ul li {
  display: flex;
  align-items: center;
  gap: 3px;
  height: 16px;
  padding-left: 29px;
}

.tree ul li::before {
  content: "";
  position: absolute;
  left: 18px;
  top: 0;
  width: 10px;
  height: 8px;
  border-bottom: 1px dotted #888;
  border-left: 1px dotted #888;
}

.tree ul li:not(:last-child)::after {
  content: "";
  position: absolute;
  left: 18px;
  top: 8px;
  height: 8px;
  border-left: 1px dotted #888;
}

.tree ul span {
  padding: 0 1px;
}

.tree .current span {
  background: #d9d9d9;
}

.tree .cad {
  margin-left: 1px;
}

.tree em {
  align-self: flex-start;
  margin-left: -4px;
  font: bold 9px/10px "Liberation Sans", sans-serif;
  background: #ffdc00;
}

/* Component list */
.components {
  width: 164px;
  margin-right: 3px;
}

.component-tools {
  height: 26px;
  display: flex;
  align-items: center;
  gap: 7px;
  padding-left: 5px;
  background: linear-gradient(#fdfdfd, #f0f0f0);
}

.component-tools button {
  display: flex;
  align-items: center;
  gap: 4px;
}

.search {
  display: flex;
  height: 24px;
  margin: 2px 0 1px;
}

.search input {
  width: 138px;
  margin-left: 1px;
  padding-left: 3px;
  background: #fff;
  border: 1px solid #666;
}

.search input::placeholder {
  color: #777;
}

.search button {
  flex: 1;
  display: flex;
  align-items: center;
  justify-content: center;
}

.component-tree ul {
  border: 0;
}

.component-tree .picked span {
  display: flex;
  align-items: center;
  gap: 4px;
  width: 51px;
  height: 16px;
  background: #316ac5;
}

/* Toolbars */
main {
  flex: 1;
  min-width: 0;
  display: flex;
  flex-direction: column;
  overflow: hidden;
}

.toolbar {
  height: 28px;
  flex: none;
  display: flex;
  align-items: center;
  gap: 7px;
  padding-left: 4px;
  white-space: nowrap;
  background: linear-gradient(#fcfcfc, #f1f1f1);
}

.toolbar button {
  display: flex;
  align-items: center;
  gap: 4px;
  flex: none;
}

.toolbar button:disabled {
  color: #8a8a8a;
}

.tight .caret {
  margin-left: -2px;
}

.grip {
  width: 2px;
  height: 16px;
  flex: none;
  background: repeating-linear-gradient(#b8b8b8 0 2px, transparent 2px 4px);
}

.sep {
  width: 1px;
  height: 16px;
  flex: none;
  background: #b0b0b0;
}

.edit-bar {
  margin-top: -12px;
  width: 792px;
  gap: 6px;
}

.bar-row {
  display: flex;
  gap: 3px;
}

.layer-bar {
  width: 638px;
  gap: 3px;
}

.axis-bar {
  flex: 1;
  padding-left: 1px;
}

.combo {
  position: relative;
  width: 69px;
  height: 22px;
  flex: none;
  background: #fff;
}

.combo.short {
  width: 57px;
}

.combo select {
  appearance: none;
  width: 100%;
  height: 100%;
  padding-left: 2px;
}

.combo::after {
  content: "";
  position: absolute;
  right: 3px;
  top: 10px;
  border: 3px solid transparent;
  border-top-color: #000;
  border-bottom: 0;
}

.combo.boxed {
  width: 56px;
  margin: 0 -5px 0 -2px;
  border: 1px solid #777;
  background: #f0f0f0;
}

.combo.boxed::after {
  border-top-color: #777;
}

.toggles {
  display: flex;
}

.toggles button {
  height: 22px;
  padding: 0 3px;
  border: 1px solid transparent;
  margin-right: -1px;
}

.toggles .on {
  border-color: #0078d7;
  background: #dfeaf5;
}

.draw-bar {
  height: 29px;
  padding-left: 2px;
}

.canvas {
  flex: 1;
  min-height: 0;
  width: 100%;
  display: block;
}

.bubble-text {
  font: 15px "Liberation Sans", sans-serif;
  text-anchor: middle;
  fill: #d8d8d8;
}

.bar-text {
  font: 10px "Liberation Sans", sans-serif;
  text-anchor: middle;
  fill: #c8c8c8;
}

.coord-bar {
  height: 31px;
  margin-bottom: 2px;
  padding-left: 426px;
  gap: 4px;
}

.coord-bar .grip {
  margin-left: 5px;
}

.spin {
  position: relative;
  display: flex;
  width: 56px;
  height: 22px;
  flex: none;
  background: #fff;
}

.spin input {
  width: 100%;
  padding-right: 16px;
  text-align: right;
}

.spin i::before, .spin i::after {
  content: "";
  position: absolute;
  right: 2px;
  top: 4px;
  border: 3px solid transparent;
  border-bottom-color: currentColor;
  border-top: 0;
}

.spin i::after {
  top: 15px;
  border: 3px solid transparent;
  border-top-color: currentColor;
  border-bottom: 0;
}

.spin.boxed {
  width: 68px;
  border: 1px solid #777;
  background: #f0f0f0;
  color: #777;
}

.rotate-label {
  margin-left: 3px;
}

.degree {
  color: #777;
}

.tick {
  appearance: none;
  position: relative;
  width: 11px;
  height: 11px;
  flex: none;
  background: #fff;
  border: 1px solid #888;
}

.tick:checked::after {
  content: "";
  position: absolute;
  left: 3px;
  top: 0;
  width: 3px;
  height: 6px;
  border: solid #444;
  border-width: 0 1px 1px 0;
  transform: rotate(45deg);
}

/* Rebar editor */
.rebar-dock {
  height: 199px;
  flex: none;
  display: flex;
}

.rebar-handle {
  width: 13px;
  flex: none;
  position: relative;
  background: radial-gradient(circle, #b0b0b0 1px, transparent 1px) 2px 0 / 5px 5px;
}

.rebar-handle button {
  position: absolute;
  top: 1px;
  left: 1px;
  width: 11px;
  height: 11px;
  line-height: 8px;
  background: #ddd;
  border: 1px solid #888;
}

.rebar {
  flex: 1;
  min-width: 0;
  display: flex;
  flex-direction: column;
}

.rebar-bar {
  height: 28px;
}

.rebar-bar .sep {
  margin: 0 -1px;
}

.rebar-sheet {
  flex: 1;
  min-height: 0;
  overflow: hidden;
  background: #fff;
  border: solid #a0a0a0;
  border-width: 1px 0 1px 1px;
}

.rebar-table {
  width: 930px;
  font-family: "Liberation Mono", "Noto Sans CJK SC", monospace;
}

.rebar-table .c-no { width: 33px; }
.rebar-table .c-name { width: 73px; }
.rebar-table .c-dia { width: 56px; }
.rebar-table .c-grade { width: 36px; }
.rebar-table .c-fig { width: 33px; }
.rebar-table .c-shape { width: 201px; }
.rebar-table .c-calc { width: 166px; }
.rebar-table .c-desc { width: 156px; }
.rebar-table .c-len { width: 61px; }
.rebar-table .c-count { width: 38px; }
.rebar-table .c-lap { width: 39px; }
.rebar-table .c-loss { width: 38px; }

th, td {
  padding: 0;
  font-weight: normal;
  white-space: nowrap;
  overflow: hidden;
  border: solid #c0c0c0;
  border-width: 0 1px 1px 0;
}

th {
  background: linear-gradient(#fff, #ececec);
}

thead .active {
  background: linear-gradient(#f8dca4, #f3c068);
  color: #600060;
}

.rebar-table th {
  height: 19px;
}

.rebar-table td {
  padding-left: 2px;
}

.rebar-table td:nth-child(2) {
  border-right-color: #000;
}

.rebar-table .row-1 td, .rebar-table .row-2 td {
  background: #ccffd9;
}

.rebar-table .row-1 th {
  height: 34px;
  color: #600060;
}

.rebar-table .row-2 th {
  height: 29px;
}

.rebar-table tbody th, .num {
  font: 11px/16px "Liberation Sans", sans-serif;
}

.rebar-table .grade {
  text-align: center;
}

.grade svg {
  width: 12px;
  height: 12px;
  vertical-align: middle;
}

.rebar-table .row-1 .active {
  background: #aeeada;
}

.rebar-table .row-1 th.active {
  background: #ffd48a;
}

.figure {
  display: flex;
  justify-content: center;
  gap: 3px;
  padding-right: 4px;
  font: 11px/16px "Liberation Sans", sans-serif;
}

.figure b {
  width: 150px;
  font-weight: normal;
  text-align: center;
  color: #f00;
  border-bottom: 2px solid #000;
  line-height: 14px;
}

.figure .hooked {
  width: 121px;
  height: 15px;
  border: solid #000;
  border-width: 0 2px 2px;
}

/* Status strip */
footer {
  height: 4px;
  margin-top: 1px;
  flex: none;
  display: flex;
  gap: 3px;
}

footer span {
  flex: 1;
  background: #fafafa;
  border: 1px solid #d0d0d0;
  border-width: 1px 1px 0;
}

footer span:first-child {
  flex: 0 0 148px;
}

footer span:nth-child(2) {
  flex: 0 0 227px;
}

/* Floating windows */
.window {
  position: absolute;
  background: #fff;
  box-shadow: 0 2px 14px rgba(0, 0, 0, 0.4);
}

.props {
  left: 315px;
  top: 121px;
  width: 444px;
  height: 574px;
  border: 1px solid #aaa;
  border-top-color: #fff;
}

.props header {
  height: 29px;
  display: flex;
  justify-content: space-between;
  align-items: center;
  padding-left: 7px;
  color: #999;
}

.props header button {
  width: 18px;
  height: 19px;
  background: #d8d8d8;
  color: #eee;
}

.props table {
  width: 440px;
  border-top: 1px solid #aaa;
  font-family: "Liberation Mono", "Noto Sans CJK SC", monospace;
}

.p-no {
  width: 22px;
}

.p-name {
  width: 121px;
}

.props thead th {
  height: 24px;
}

.props tbody th, .props td {
  height: 19px;
  line-height: 16px;
}

.props tbody th {
  font-family: "Liberation Sans", sans-serif;
  font-size: 11px;
}

.props td:nth-child(2) {
  padding-left: 19px;
}

.props td:nth-child(3) {
  padding-left: 2px;
  color: #808080;
}

.props td svg {
  width: 12px;
  height: 12px;
  vertical-align: -2px;
}

.props .selected td:nth-child(2) {
  background: #0078d7;
  color: #fff;
}

.props .link td:nth-child(2) {
  color: #00f;
}

.props .group td:nth-child(2) {
  padding-left: 2px;
  color: #808080;
}

.props .group button {
  width: 13px;
  height: 13px;
  margin-right: 4px;
  border: 1px solid #aaa;
  color: #000;
  line-height: 9px;
  vertical-align: 1px;
}

.display {
  left: 211px;
  top: 169px;
  width: 168px;
  height: 179px;
  border: 1px solid #1883d7;
  padding: 0 2px 1px;
  display: flex;
  flex-direction: column;
}

.display header {
  padding: 7px 6px 8px;
}

.checks {
  flex: 1;
  border: 1px solid #828790;
  padding: 2px 1px;
}

.checks label {
  display: flex;
  align-items: center;
  gap: 2px;
  height: 12px;
  padding-left: 1px;
}

.checks span {
  flex: 1;
  line-height: 12px;
  padding-left: 1px;
}

.checks .focus span {
  outline: 1px dotted #000;
}

.markup {
  position: absolute;
  left: 0;
  top: 0;
  pointer-events: none;
}
```
